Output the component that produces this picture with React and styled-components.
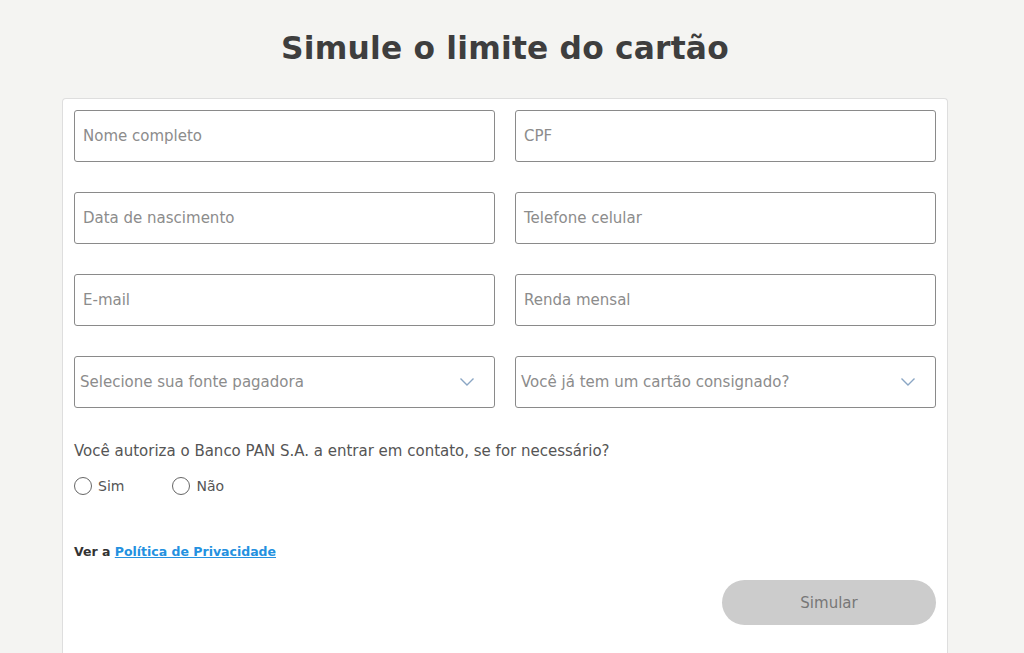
import React from 'react';
import styled, { createGlobalStyle } from 'styled-components';

const GlobalStyle = createGlobalStyle`
  html, body {
    margin: 0;
    padding: 0;
    background: #f4f4f2;
    font-family: "DejaVu Sans", "Noto Sans", sans-serif;
    overflow: hidden;
  }
`;

const Page = styled.div`
  width: 1024px;
  height: 653px;
  display: flex;
  flex-direction: column;
  padding-left: 62px;
  box-sizing: border-box;
`;

const Title = styled.h1`
  margin: 30px 0 0;
  width: 886px;
  height: 68px;
  text-align: center;
  font-size: 31.3px;
  font-weight: 700;
  color: #3e3e3e;
  letter-spacing: 0.2px;
`;

const Card = styled.form`
  box-sizing: border-box;
  width: 886px;
  flex: 1;
  background: #fff;
  border: 1px solid #dedede;
  border-bottom: none;
  border-radius: 4px 4px 0 0;
  padding: 11px 11px 0;
`;

const Grid = styled.div`
  display: grid;
  grid-template-columns: 1fr 1fr;
  column-gap: 20px;
  row-gap: 30px;
`;

const Field = styled.div`
  box-sizing: border-box;
  height: 52px;
  border: 1px solid #8a8a8a;
  border-radius: 3px;
  display: flex;
  align-items: center;
  justify-content: space-between;
  padding: 0 ${p => (p.$select ? '19px' : '8px')} 0 ${p => (p.$select ? '5px' : '8px')};
  font-size: 15px;
  color: #8c8c8c;
`;

const Question = styled.p`
  margin: 34px 0 0;
  font-size: 15px;
  color: #555;
`;

const Radios = styled.div`
  display: flex;
  gap: 48px;
  margin-top: 17px;
`;

const RadioLabel = styled.label`
  display: flex;
  align-items: center;
  gap: 6px;
  font-size: 14px;
  color: #555;
`;

const Circle = styled.span`
  width: 16px;
  height: 16px;
  border: 1.5px solid #666;
  border-radius: 50%;
`;

const Privacy = styled.p`
  margin: 49px 0 0;
  font-size: 12.5px;
  font-weight: 700;
  color: #333;
`;

const PrivacyLink = styled.a`
  color: #2491e0;
  text-decoration: underline;
`;

const Footer = styled.div`
  display: flex;
  justify-content: flex-end;
  margin-top: 21px;
`;

const Button = styled.button`
  width: 214px;
  height: 45px;
  border: none;
  border-radius: 23px;
  background: #cccccc;
  color: #777;
  font-family: inherit;
  font-size: 15px;
`;

const Chevron = () => (
  <svg width="16" height="10" viewBox="0 0 16 10" fill="none">
    <path d="M1.5 1.5L8 8l6.5-6.5" stroke="#8aa6c4" strokeWidth="1.4" />
  </svg>
);

const fields = [
  'Nome completo',
  'CPF',
  'Data de nascimento',
  'Telefone celular',
  'E-mail',
  'Renda mensal',
];

const selects = ['Selecione sua fonte pagadora', 'Você já tem um cartão consignado?'];

export default function App() {
  return (
    <Page>
      <GlobalStyle />
      <Title>Simule o limite do cartão</Title>
      <Card>
        <Grid>
          {fields.map(f => (
            <Field key={f}>{f}</Field>
          ))}
          {selects.map(s => (
            <Field key={s} $select>
              {s}
              <Chevron />
            </Field>
          ))}
        </Grid>
        <Question>Você autoriza o Banco PAN S.A. a entrar em contato, se for necessário?</Question>
        <Radios>
          <RadioLabel>
            <Circle />
            Sim
          </RadioLabel>
          <RadioLabel>
            <Circle />
            Não
          </RadioLabel>
        </Radios>
        <Privacy>
          Ver a <PrivacyLink href="#">Política de Privacidade</PrivacyLink>
        </Privacy>
        <Footer>
          <Button type="button">Simular</Button>
        </Footer>
      </Card>
    </Page>
  );
}
